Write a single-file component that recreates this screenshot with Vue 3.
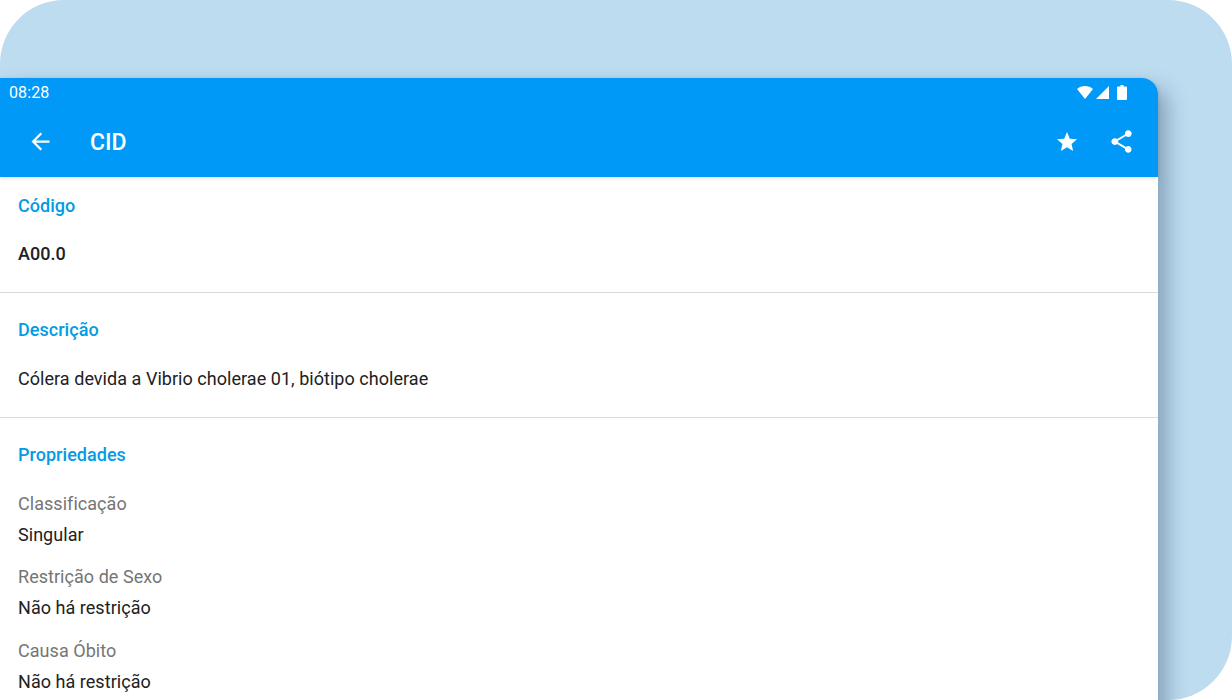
<script setup>
const props = [
  { label: 'Classificação', value: 'Singular' },
  { label: 'Restrição de Sexo', value: 'Não há restrição' },
  { label: 'Causa Óbito', value: 'Não há restrição' },
]
</script>

<template>
  <div class="stage">
    <div class="device">
      <header class="appbar">
        <div class="status">
          <span class="time">08:28</span>
          <div class="status-icons">
            <svg class="wifi" width="16" height="13" viewBox="0 0 16 13"><path d="M0 3C2.100 1.100 4.900 0 8 0s5.900 1.100 8 3L8 13z" fill="#fff"/></svg>
            <svg class="signal" width="13" height="13" viewBox="0 0 13 13"><path d="M13 0v13H0z" fill="#fff"/></svg>
            <svg width="10" height="15" viewBox="0 0 10 15"><path d="M3.500 0h3v1.500H9a1 1 0 0 1 1 1V14a1 1 0 0 1-1 1H1a1 1 0 0 1-1-1V2.500a1 1 0 0 1 1-1h2.500z" fill="#fff"/></svg>
          </div>
        </div>
        <div class="toolbar">
          <svg width="27" height="27" viewBox="0 0 24 24"><path d="M20 11H7.830l5.590-5.590L12 4l-8 8 8 8 1.410-1.410L7.830 13H20z" fill="#fff"/></svg>
          <span class="title">CID</span>
          <svg class="star" width="24" height="24" viewBox="0 0 24 24"><path d="M12 17.270 18.180 21l-1.640-7.030L22 9.240l-7.190-.61L12 2 9.190 8.630 2 9.240l5.460 4.730L5.820 21z" fill="#fff"/></svg>
          <svg width="27" height="27" viewBox="0 0 24 24"><path d="M18 16.080c-.76 0-1.440.3-1.960.77L8.910 12.700c.05-.23.09-.46.09-.7s-.04-.47-.09-.7l7.050-4.110c.54.5 1.250.81 2.040.81 1.660 0 3-1.340 3-3s-1.340-3-3-3-3 1.340-3 3c0 .24.040.47.090.7L8.040 9.810C7.500 9.310 6.790 9 6 9c-1.660 0-3 1.340-3 3s1.340 3 3 3c.79 0 1.500-.31 2.040-.81l7.120 4.160c-.05.21-.08.43-.08.650 0 1.610 1.310 2.920 2.920 2.920s2.920-1.310 2.920-2.920-1.310-2.920-2.920-2.920z" fill="#fff"/></svg>
        </div>
      </header>

      <section class="block first">
        <h2 class="heading">Código</h2>
        <p class="code">A00.0</p>
      </section>
      <section class="block">
        <h2 class="heading">Descrição</h2>
        <p class="desc">Cólera devida a Vibrio cholerae 01, biótipo cholerae</p>
      </section>
      <section class="block last">
        <h2 class="heading">Propriedades</h2>
        <div v-for="p in props" :key="p.label" class="prop">
          <div class="label">{{ p.label }}</div>
          <div class="value">{{ p.value }}</div>
        </div>
      </section>
    </div>
  </div>
</template>

<style scoped>
.stage {
  width: 1232px;
  height: 700px;
  box-sizing: border-box;
  padding-top: 78px;
  background: #bedcf0;
  border-radius: 64px 64px 64px 0;
  overflow: hidden;
  font-family: Roboto, "Liberation Sans", sans-serif;
  letter-spacing: 0.04px;
}
.device {
  width: 1158px;
  height: 640px;
  background: #fff;
  border-top-right-radius: 16px;
  box-shadow: 10px 10px 20px rgba(40, 70, 100, 0.36);
}
.appbar {
  position: relative;
  background: #0099f7;
  height: 99px;
  border-top-right-radius: 16px;
  color: #fff;
  box-shadow: 0 1px 4px rgba(0, 0, 0, 0.14);
}
.status {
  height: 28px;
  display: flex;
  align-items: center;
  justify-content: space-between;
  padding: 0 31px 0 9px;
}
.time { font-size: 16px; letter-spacing: 0.1px; }
.status-icons { display: flex; align-items: center; }
.wifi { margin-right: 3px; }
.signal { margin-right: 8px; }
.toolbar {
  height: 71px;
  display: flex;
  align-items: center;
  padding: 0 23px 0 27px;
}
.title { font-size: 23px; font-weight: 500; margin: 2px 0 0 36px; flex: 1; letter-spacing: 0; }
.star { margin-right: 29px; }
.block {
  padding: 25px 18px 26px;
  border-bottom: 1px solid #d9d9d9;
}
.block.first { padding-top: 17px; }
.block.first .code { margin-top: 24px; }
.block.last { border-bottom: none; }
.heading {
  margin: 0;
  font-size: 18px;
  line-height: 24px;
  font-weight: 500;
  color: #039be5;
}
.code, .desc {
  margin: 25px 0 0;
  font-size: 18px;
  line-height: 24px;
  color: #212121;
}
.code { font-weight: 500; }
.prop { margin-top: 18.4px; }
.block.last .heading + .prop { margin-top: 25px; }
.label { font-size: 18px; line-height: 24px; color: #757575; }
.value { font-size: 18px; line-height: 24px; color: #212121; margin-top: 7px; }
</style>
